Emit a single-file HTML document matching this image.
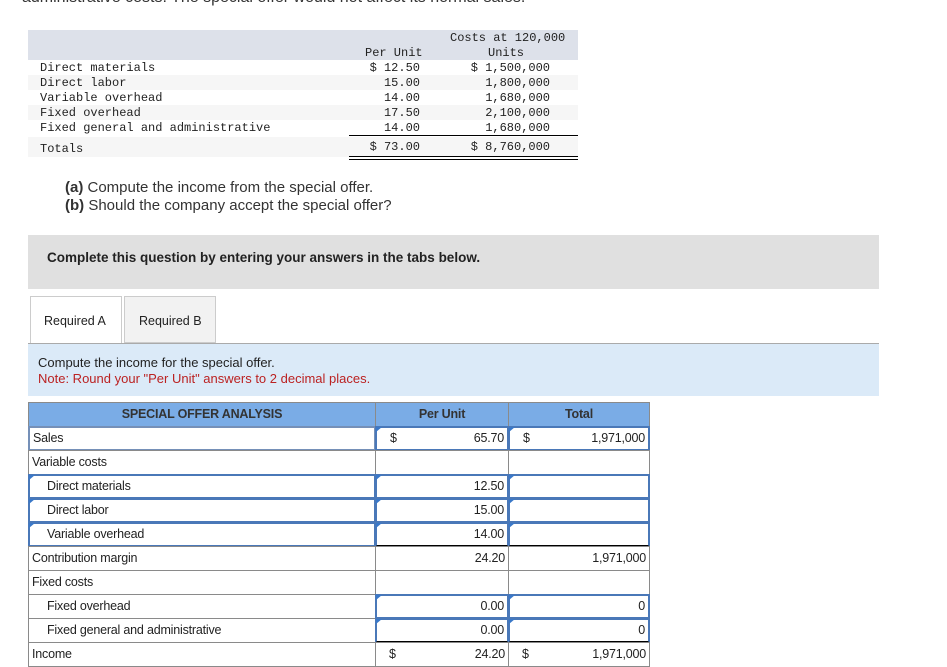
<!DOCTYPE html>
<html><head><meta charset="utf-8"><style>
body{margin:0;width:947px;height:667px;background:#fff;position:relative;overflow:hidden;font-family:"Liberation Sans",sans-serif;}
.a{position:absolute;white-space:nowrap}
.m{font-family:"Liberation Mono",monospace;font-size:12px;color:#222}
.c{position:absolute;box-sizing:border-box;border:1px solid #8a8a8a;font-size:12.5px;color:#222;line-height:22px;padding:0 3px;white-space:nowrap;letter-spacing:-0.2px}
.b{border:2px solid #4a78b8;line-height:20px}
.f:before{content:"";position:absolute;left:-1px;top:-1px;border-left:6px solid #3a78c8;border-bottom:5px solid transparent;}
.r{text-align:right}
</style></head><body>
<div class="a" style="left:22px;top:-11px;font-size:16px;color:#333">administrative costs. The special offer would not affect its normal sales.</div>

<div class="a" style="left:28px;top:30px;width:550px;height:30px;background:#dde1ea"></div>
<div class="a" style="left:28px;top:75px;width:550px;height:15px;background:#f6f6f6"></div>
<div class="a" style="left:28px;top:105px;width:550px;height:15px;background:#f6f6f6"></div>
<div class="a" style="left:28px;top:137px;width:550px;height:20px;background:#f6f6f6"></div>
<div class="a m" style="left:450px;top:31px">Costs at 120,000</div>
<div class="a m" style="left:488px;top:46px">Units</div>
<div class="a m" style="left:365px;top:46px">Per Unit</div>
<div class="a m" style="left:40px;top:61px;line-height:15px">Direct materials<br>Direct labor<br>Variable overhead<br>Fixed overhead<br>Fixed general and administrative</div>
<div class="a m" style="left:340px;top:61px;width:80px;text-align:right;line-height:15px">$ 12.50<br>15.00<br>14.00<br>17.50<br>14.00</div>
<div class="a m" style="left:450px;top:61px;width:100px;text-align:right;line-height:15px">$ 1,500,000<br>1,800,000<br>1,680,000<br>2,100,000<br>1,680,000</div>
<div class="a" style="left:349px;top:135px;width:229px;border-top:1px solid #000"></div>
<div class="a m" style="left:40px;top:142px">Totals</div>
<div class="a m" style="left:340px;top:140px;width:80px;text-align:right">$ 73.00</div>
<div class="a m" style="left:450px;top:140px;width:100px;text-align:right">$ 8,760,000</div>
<div class="a" style="left:349px;top:156px;width:229px;height:2px;border-top:1px solid #000;border-bottom:1px solid #000"></div>

<div class="a" style="left:65px;top:179px;font-size:15px;color:#333;line-height:18px"><b>(a)</b> Compute the income from the special offer.<br><b>(b)</b> Should the company accept the special offer?</div>

<div class="a" style="left:28px;top:235px;width:851px;height:54px;background:#e0e0e0"></div>
<div class="a" style="left:47px;top:250px;font-size:13.5px;font-weight:bold;color:#222">Complete this question by entering your answers in the tabs below.</div>

<div class="a" style="left:30px;top:296px;width:92px;height:48px;box-sizing:border-box;border:1px solid #ccc;border-bottom:none;background:#fff"></div>
<div class="a" style="left:124px;top:296px;width:92px;height:47px;box-sizing:border-box;border:1px solid #ccc;background:#f2f2f2"></div>
<div class="a" style="left:44px;top:314px;font-size:12.5px;color:#222">Required A</div>
<div class="a" style="left:139px;top:314px;font-size:12.5px;color:#222">Required B</div>
<div class="a" style="left:28px;top:343px;width:851px;border-top:1px solid #aaa"></div>
<div class="a" style="left:28px;top:344px;width:851px;height:52px;background:#dbeaf8"></div>
<div class="a" style="left:38px;top:355px;font-size:13px;color:#222;line-height:16px">Compute the income for the special offer.<br><span style="color:#b22">Note: Round your "Per Unit" answers to 2 decimal places.</span></div>

<div class="c" style="left:28px;top:402px;width:348px;height:25px;background:#7aace6;text-align:center;font-weight:bold;color:#333">SPECIAL OFFER ANALYSIS</div>
<div class="c" style="left:375px;top:402px;width:134px;height:25px;background:#7aace6;text-align:center;font-weight:bold;color:#333">Per Unit</div>
<div class="c" style="left:508px;top:402px;width:142px;height:25px;background:#7aace6;text-align:center;font-weight:bold;color:#333">Total</div>

<div class="c b" style="left:28px;top:426px;width:348px;height:25px;border-color:#7590b8">Sales</div>
<div class="c b f" style="left:375px;top:426px;width:134px;height:25px"><span style="margin-left:10px">$</span><span style="float:right">65.70</span></div>
<div class="c b f" style="left:508px;top:426px;width:142px;height:25px"><span style="margin-left:10px">$</span><span style="float:right">1,971,000</span></div>

<div class="c" style="left:28px;top:450px;width:348px;height:25px">Variable costs</div>
<div class="c" style="left:375px;top:450px;width:134px;height:25px"></div>
<div class="c" style="left:508px;top:450px;width:142px;height:25px"></div>

<div class="c b f" style="left:28px;top:474px;width:348px;height:25px;padding-left:17px">Direct materials</div>
<div class="c b f r" style="left:375px;top:474px;width:134px;height:25px">12.50</div>
<div class="c b f" style="left:508px;top:474px;width:142px;height:25px"></div>

<div class="c b f" style="left:28px;top:498px;width:348px;height:25px;padding-left:17px">Direct labor</div>
<div class="c b f r" style="left:375px;top:498px;width:134px;height:25px">15.00</div>
<div class="c b f" style="left:508px;top:498px;width:142px;height:25px"></div>

<div class="c b f" style="left:28px;top:522px;width:348px;height:25px;padding-left:17px">Variable overhead</div>
<div class="c b f r" style="left:375px;top:522px;width:134px;height:25px;border-bottom-color:#000">14.00</div>
<div class="c b f" style="left:508px;top:522px;width:142px;height:25px;border-bottom-color:#000"></div>

<div class="c" style="left:28px;top:546px;width:348px;height:25px">Contribution margin</div>
<div class="c r" style="left:375px;top:546px;width:134px;height:25px">24.20</div>
<div class="c r" style="left:508px;top:546px;width:142px;height:25px">1,971,000</div>

<div class="c" style="left:28px;top:570px;width:348px;height:25px">Fixed costs</div>
<div class="c" style="left:375px;top:570px;width:134px;height:25px"></div>
<div class="c" style="left:508px;top:570px;width:142px;height:25px"></div>

<div class="c" style="left:28px;top:594px;width:348px;height:25px;padding-left:18px">Fixed overhead</div>
<div class="c b f r" style="left:375px;top:594px;width:134px;height:25px">0.00</div>
<div class="c b f r" style="left:508px;top:594px;width:142px;height:25px">0</div>

<div class="c" style="left:28px;top:618px;width:348px;height:25px;padding-left:18px">Fixed general and administrative</div>
<div class="c b f r" style="left:375px;top:618px;width:134px;height:25px;border-bottom-color:#000">0.00</div>
<div class="c b f r" style="left:508px;top:618px;width:142px;height:25px;border-bottom-color:#000">0</div>

<div class="c" style="left:28px;top:642px;width:348px;height:25px">Income</div>
<div class="c" style="left:375px;top:642px;width:134px;height:25px"><span style="margin-left:10px">$</span><span style="float:right">24.20</span></div>
<div class="c" style="left:508px;top:642px;width:142px;height:25px"><span style="margin-left:10px">$</span><span style="float:right">1,971,000</span></div>
</body></html>
